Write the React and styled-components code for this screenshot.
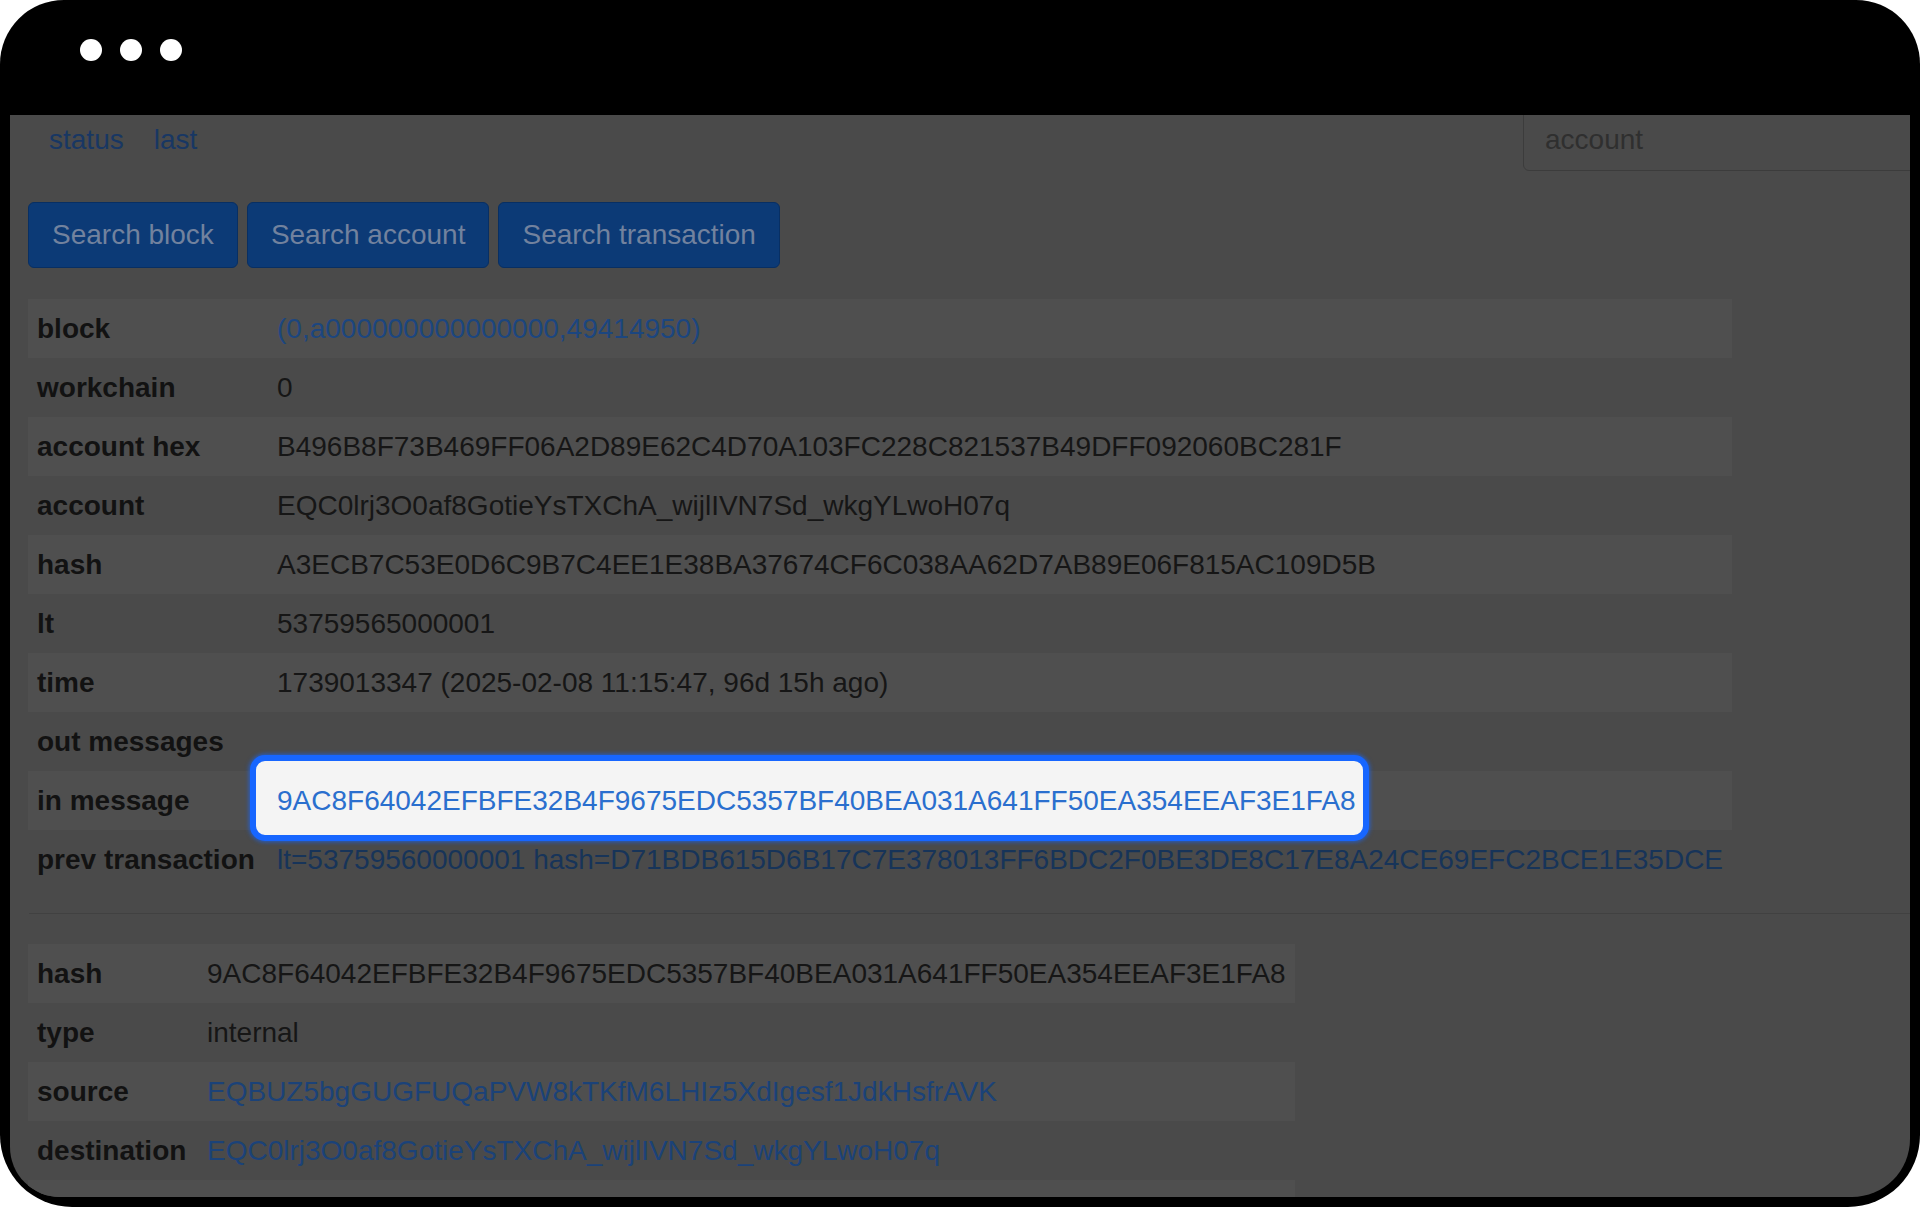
import styled, { createGlobalStyle } from 'styled-components';

const GlobalStyle = createGlobalStyle`
  html, body {
    margin: 0;
    padding: 0;
    background: #ffffff;
  }
  body {
    font-family: "Liberation Sans", Arial, Helvetica, sans-serif;
  }
  * {
    box-sizing: border-box;
  }
`;

const Frame = styled.div`
  width: 1920px;
  height: 1207px;
  background: #000;
  border-radius: 64px 64px 72px 72px;
  padding: 0 10px 10px 10px;
  display: flex;
  flex-direction: column;
  overflow: hidden;
`;

const TitleBar = styled.div`
  height: 115px;
  flex: none;
  display: flex;
  align-items: flex-start;
  gap: 18px;
  padding: 39px 0 0 70px;
`;

const Dot = styled.span`
  width: 22px;
  height: 22px;
  border-radius: 50%;
  background: #fff;
`;

const Viewport = styled.div`
  flex: 1;
  background: #4a4a4a;
  border-radius: 0 0 58px 50px;
  overflow: hidden;
`;

const Page = styled.div`
  margin-top: -6px;
  font-size: 28px;
  color: #141414;
`;

const TopRow = styled.div`
  display: flex;
  align-items: center;
  height: 62px;
  padding-left: 39px;
`;

const NavLink = styled.a`
  color: #183763;
  text-decoration: none;
  margin-right: 30px;
`;

const SearchInput = styled.input`
  margin-left: auto;
  margin-right: -40px;
  width: 427px;
  height: 62px;
  border: 1px solid #3c3c3c;
  border-radius: 6px;
  background: transparent;
  padding: 0 0 0 21px;
  font: inherit;
  color: #2e2e2e;
  outline: none;
  &::placeholder {
    color: #2f2f2f;
  }
`;

const ButtonRow = styled.div`
  display: flex;
  gap: 9px;
  margin: 31px 0 0 18px;
`;

const Button = styled.button`
  height: 66px;
  padding: 0 23px;
  border: 1px solid #082f63;
  border-radius: 6px;
  background: #0c3a76;
  color: #72829e;
  font: inherit;
  cursor: pointer;
`;

const Table = styled.table`
  border-collapse: collapse;
  border-spacing: 0;
  margin: ${(p) => p.$top}px 0 0 18px;

  tbody tr:nth-child(odd) {
    background: #4f4f4f;
  }

  th {
    width: ${(p) => p.$labelWidth}px;
  }
`;

const Label = styled.th`
  text-align: left;
  font-weight: bold;
  color: #121212;
  height: 59px;
  padding: 0 9px;
  white-space: nowrap;
  vertical-align: middle;
`;

const Value = styled.td`
  height: 59px;
  padding: 0 9px;
  white-space: nowrap;
  vertical-align: middle;
  color: #161616;
`;

const Link = styled.a`
  color: ${(p) => p.$color || '#1b4278'};
  text-decoration: none;
`;

const Spotlight = styled.a`
  position: relative;
  z-index: 0;
  display: inline-block;
  color: #2a6fce;
  text-decoration: none;

  &::before {
    content: '';
    position: absolute;
    z-index: -1;
    top: -30px;
    bottom: -24px;
    left: -27px;
    right: -13px;
    background: #f4f4f4;
    border: 6px solid #1766ff;
    border-radius: 15px;
    box-shadow: 0 0 4px 1px rgba(23, 102, 255, 0.7);
  }
`;

const Divider = styled.hr`
  margin: 24px 0 0 19px;
  border: none;
  border-top: 1px solid #414141;
`;

const txRows = [
  { label: 'block', value: '(0,a000000000000000,49414950)', link: '#1c467f' },
  { label: 'workchain', value: '0' },
  { label: 'account hex', value: 'B496B8F73B469FF06A2D89E62C4D70A103FC228C821537B49DFF092060BC281F' },
  { label: 'account', value: 'EQC0lrj3O0af8GotieYsTXChA_wijlIVN7Sd_wkgYLwoH07q' },
  { label: 'hash', value: 'A3ECB7C53E0D6C9B7C4EE1E38BA37674CF6C038AA62D7AB89E06F815AC109D5B' },
  { label: 'lt', value: '53759565000001' },
  { label: 'time', value: '1739013347 (2025-02-08 11:15:47, 96d 15h ago)' },
  { label: 'out messages', value: '' },
  { label: 'in message', value: '9AC8F64042EFBFE32B4F9675EDC5357BF40BEA031A641FF50EA354EEAF3E1FA8', spotlight: true },
  {
    label: 'prev transaction',
    value: 'lt=53759560000001 hash=D71BDB615D6B17C7E378013FF6BDC2F0BE3DE8C17E8A24CE69EFC2BCE1E35DCE',
    link: '#173459',
  },
];

const msgRows = [
  { label: 'hash', value: '9AC8F64042EFBFE32B4F9675EDC5357BF40BEA031A641FF50EA354EEAF3E1FA8' },
  { label: 'type', value: 'internal' },
  { label: 'source', value: 'EQBUZ5bgGUGFUQaPVW8kTKfM6LHIz5XdIgesf1JdkHsfrAVK' , link: '#1b4278' },
  { label: 'destination', value: 'EQC0lrj3O0af8GotieYsTXChA_wijlIVN7Sd_wkgYLwoH07q', link: '#1b4278' },
  { label: '', value: '' },
];

const renderValue = (row) => {
  if (row.spotlight) return <Spotlight href="#">{row.value}</Spotlight>;
  if (row.link) return <Link href="#" $color={row.link}>{row.value}</Link>;
  return row.value;
};

const InfoTable = ({ rows, labelWidth, top }) => (
  <Table $labelWidth={labelWidth} $top={top}>
    <tbody>
      {rows.map((row, i) => (
        <tr key={i}>
          <Label>{row.label}</Label>
          <Value>{renderValue(row)}</Value>
        </tr>
      ))}
    </tbody>
  </Table>
);

export default function App() {
  return (
    <>
      <GlobalStyle />
      <Frame>
        <TitleBar>
          <Dot />
          <Dot />
          <Dot />
        </TitleBar>
        <Viewport>
          <Page>
            <TopRow>
              <NavLink href="#">status</NavLink>
              <NavLink href="#">last</NavLink>
              <SearchInput placeholder="account" />
            </TopRow>
            <ButtonRow>
              <Button>Search block</Button>
              <Button>Search account</Button>
              <Button>Search transaction</Button>
            </ButtonRow>
            <InfoTable rows={txRows} labelWidth={240} top={31} />
            <Divider />
            <InfoTable rows={msgRows} labelWidth={170} top={30} />
          </Page>
        </Viewport>
      </Frame>
    </>
  );
}
